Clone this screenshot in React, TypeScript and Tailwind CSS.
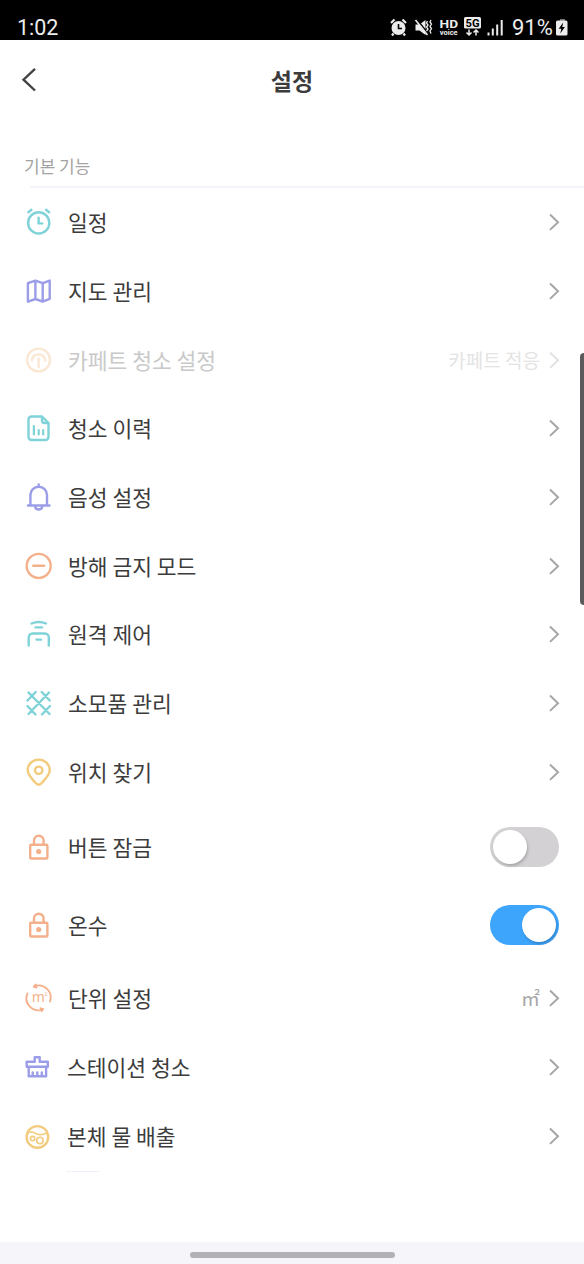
import type { ReactNode } from "react";

const TEAL = "#7fd3d8";
const VIOLET = "#9b9de8";
const ORANGE = "#f3b08a";
const YELLOW = "#f3cb7d";

const Icon = ({ color, children }: { color: string; children: ReactNode }) => (
  <svg
    viewBox="0 0 28 28"
    className="h-7 w-7 shrink-0 overflow-visible"
    fill="none"
    stroke={color}
    strokeWidth={2.4}
    strokeLinecap="round"
    strokeLinejoin="round"
  >
    {children}
  </svg>
);

const ClockIcon = () => (
  <Icon color={TEAL}>
    <circle cx="14.7" cy="14.9" r="10.6" />
    <path d="M14.6 9.8v5.6h3.6M4.4 4.200l3-2.400M22.100 1.800l3 2.400" />
  </Icon>
);

const MapIcon = () => (
  <Icon color={VIOLET}>
    <path d="M3.9 6.2l7.5-2.6 7.3 2.6 7-2.6v18.2l-7 2.8-7.3-2.6-7.5 2.6zM11.4 3.6V22M18.7 6.2v18.4" />
  </Icon>
);

const CarpetIcon = () => (
  <Icon color="#fbe8d4">
    <circle cx="14.6" cy="14" r="11.4" />
    <path d="M7.800 14.500c.4-3.800 3.200-6 6.800-6s6.400 2.200 6.800 6M14.600 12.500v8.500" />
  </Icon>
);

const HistoryIcon = () => (
  <Icon color={TEAL}>
    <path d="M18 2.5H7.5a3 3 0 0 0-3 3V23a3 3 0 0 0 3 3h14a3 3 0 0 0 3-3V9zM18 2.5V6.500a2.500 2.500 0 0 0 2.500 2.500h4" />
    <path d="M9.900 12v8.500M14.700 16v4.500M19.200 16v4.500" strokeWidth="2.200" />
  </Icon>
);

const BellIcon = () => (
  <Icon color={VIOLET}>
    <path d="M14.700 1.500v2M6.400 22.300V12a8.300 8.300 0 0 1 16.600 0v10.300M4 22.500h21.500M11 23.500c.4 2 1.800 3 3.700 3s3.300-1 3.700-3" />
  </Icon>
);

const MinusIcon = () => (
  <Icon color={ORANGE}>
    <circle cx="14.7" cy="13.9" r="12" />
    <path d="M9.200 13.700h11" />
  </Icon>
);

const RemoteIcon = () => (
  <Icon color={TEAL}>
    <path d="M7.500 3.500c4.500-1.900 10-1.900 14.500 0M11.600 7.400h6.300M4.700 25.500V17.500a4 4 0 0 1 4-4h12.100a4 4 0 0 1 4 4v8M12.500 19.600h4.500" />
  </Icon>
);

const PartsIcon = () => (
  <Icon color={TEAL}>
    <path d="M4.500 3.500l21 21.500M25 3.500L4.500 25M11.700 3L3.500 11.500M17.700 3l8 8.500M3.500 17l8 8.500M26 17l-8 8.500" />
  </Icon>
);

const PinIcon = () => (
  <Icon color={YELLOW}>
    <path d="M14.700 26.700c-1.500 0-2.400-.9-3.500-2.200C7.500 20.300 3.700 16.800 3.700 12.300a11 10.700 0 0 1 22 0c0 4.500-3.800 8-7.500 12.200-1.100 1.300-2 2.200-3.500 2.200z" />
    <circle cx="14.700" cy="12.300" r="3.700" />
  </Icon>
);

const LockIcon = () => (
  <Icon color={ORANGE}>
    <rect x="6.200" y="11.700" width="17.200" height="13.800" rx="1" />
    <path d="M10 11.500V7.500a4.800 4.800 0 0 1 9.600 0v4" />
    <circle cx="14.700" cy="18.500" r="1.400" fill={ORANGE} />
  </Icon>
);

const UnitIcon = () => (
  <Icon color={ORANGE}>
    <path
      d="M3.400 9.500A12 12 0 0 0 19 25.300M17.700 27l1.500-1.800-2.700-.9M26 17.500A12 12 0 0 0 9.700 2.600M11.800 .6l-2 1.900 2.700 1"
      strokeWidth="1.900"
    />
    <text
      x="7.800"
      y="17.800"
      fontSize="14"
      fill={ORANGE}
      stroke="none"
      className="font-['Noto_Sans',sans-serif]"
    >
      m
    </text>
    <text
      x="20.500"
      y="11.500"
      fontSize="5"
      fill={ORANGE}
      stroke="none"
      className="font-['Noto_Sans',sans-serif]"
    >
      2
    </text>
  </Icon>
);

const BrushIcon = () => (
  <Icon color={VIOLET}>
    <path d="M3.700 8.700h8V4.300h5v4.400h8.100v5H3.700zM5.700 13.700v9.600h17.400v-9.600M9.700 19.500v3.500M14.300 19.500v3.500M18.800 19.500v3.500" />
  </Icon>
);

const DrainIcon = () => (
  <Icon color={YELLOW}>
    <circle cx="14.400" cy="14.900" r="10.800" />
    <path
      d="M4.500 11.500c2.500-2 5-2 7.500-.3s6.500 2.300 12-.2"
      strokeWidth="1.600"
    />
    <circle cx="9.600" cy="16.600" r="2.200" strokeWidth="1.600" />
    <circle cx="16.900" cy="18.500" r="3.200" strokeWidth="1.600" />
  </Icon>
);

const Chevron = ({ faded }: { faded?: boolean }) => (
  <svg viewBox="0 0 12 20" className="h-5 w-3 shrink-0" fill="none">
    <path
      d="M2 2.500l8 7.700-8 7.700"
      stroke={faded ? "#e2e2e2" : "#a6a6a6"}
      strokeWidth="2"
    />
  </svg>
);

const Toggle = ({ on }: { on?: boolean }) => (
  <div
    className={`mr-px flex h-10 w-[69px] items-center rounded-full px-[3px] ${
      on ? "justify-end bg-[#3da5fc]" : "justify-start bg-[#d4d1d5]"
    }`}
  >
    <div className="h-[34px] w-[34px] rounded-full bg-white shadow-[1px_2px_3px_rgba(0,0,0,0.2)]"></div>
  </div>
);

type Item = {
  label: string;
  icon: ReactNode;
  value?: string;
  disabled?: boolean;
  toggle?: "on" | "off";
  shifted?: boolean;
};

const items: Item[] = [
  { label: "일정", icon: <ClockIcon /> },
  { label: "지도 관리", icon: <MapIcon /> },
  {
    label: "카페트 청소 설정",
    icon: <CarpetIcon />,
    value: "카페트 적응",
    disabled: true,
  },
  { label: "청소 이력", icon: <HistoryIcon /> },
  { label: "음성 설정", icon: <BellIcon /> },
  { label: "방해 금지 모드", icon: <MinusIcon /> },
  { label: "원격 제어", icon: <RemoteIcon /> },
  { label: "소모품 관리", icon: <PartsIcon /> },
  { label: "위치 찾기", icon: <PinIcon /> },
  { label: "버튼 잠금", icon: <LockIcon />, toggle: "off" },
  { label: "온수", icon: <LockIcon />, toggle: "on" },
  { label: "단위 설정", icon: <UnitIcon />, value: "㎡" },
  { label: "스테이션 청소", icon: <BrushIcon />, shifted: true },
  { label: "본체 물 배출", icon: <DrainIcon />, shifted: true },
];

const Row = ({ label, icon, value, disabled, toggle, shifted }: Item) => (
  <div
    className={`flex shrink-0 items-center pr-6 ${
      toggle ? "h-[78.8px] pt-[2px]" : "h-[68.7px]"
    } ${shifted ? "pl-[23px]" : "pl-6"}`}
  >
    {icon}
    <span
      className={`ml-4 grow text-[21.5px] leading-7 ${
        disabled ? "text-[#c9c9c9]" : "text-[#3c3c3c]"
      }`}
    >
      {label}
    </span>
    {value && (
      <span
        className={`mr-2 text-[19px] leading-7 ${
          disabled ? "text-[#e4e4e4]" : "text-[#a6a6a6]"
        }`}
      >
        {value}
      </span>
    )}
    {toggle ? <Toggle on={toggle === "on"} /> : <Chevron faded={disabled} />}
  </div>
);

const StatusBar = () => (
  <div className="flex h-10 shrink-0 items-center bg-black pt-[15px] pl-[17px] font-[Roboto,sans-serif] text-[#ececec]">
    <span className="grow text-[21.5px] leading-6">1:02</span>
    <svg viewBox="0 0 122 24" className="h-6 w-[122px]" fill="none">
      {/* alarm */}
      <circle cx="8.500" cy="12" r="7" fill="#ececec" />
      <path
        d="M1 7l3.500-3.500M16 7l-3.500-3.500M3.500 17.500L2 19.500M13.500 17.500l1.500 2"
        stroke="#ececec"
        strokeWidth="2.200"
      />
      <path d="M8.500 8v4.500h3.500" stroke="#000" strokeWidth="1.600" />
      {/* muted with vibration */}
      <path d="M25.500 8.500h4l6-4.500v15l-6-4.500h-4z" fill="#ececec" />
      <path d="M26.500 3l12 15" stroke="#000" strokeWidth="1.500" />
      <path d="M25.500 4l12 15" stroke="#ececec" strokeWidth="1.600" />
      <path
        d="M37.500 5l-1 2 1.500 2-1.500 2 1.500 2-1.500 2M41 4l-1 2 1.500 2-1.500 2.500 1.500 2-1.500 2.500 1 2.500"
        stroke="#ececec"
        strokeWidth="1.300"
      />
      {/* HD voice */}
      <text
        x="49.500"
        y="11.800"
        fontSize="11"
        fontWeight="700"
        textLength="18.500"
        lengthAdjust="spacingAndGlyphs"
        fill="#ececec"
      >
        HD
      </text>
      <text
        x="49.700"
        y="18.500"
        fontSize="7"
        fontWeight="700"
        textLength="18"
        lengthAdjust="spacingAndGlyphs"
        fill="#ececec"
      >
        voice
      </text>
      {/* 5G */}
      <rect x="74" y="1" width="17" height="11.500" rx="1.500" fill="#ececec" />
      <text
        x="75.500"
        y="10.700"
        fontSize="11"
        fontWeight="700"
        textLength="14"
        lengthAdjust="spacingAndGlyphs"
        fill="#000"
      >
        5G
      </text>
      <path
        d="M79 13.500v5.500M76.500 16.500l2.500 2.500 2.500-2.500M86 19.500v-5.500M83.500 16.500l2.500-2.500 2.500 2.500"
        stroke="#ececec"
        strokeWidth="1.500"
      />
      {/* signal */}
      <path
        d="M98.500 19.500v-3M102.800 19.500v-7M107.200 19.500v-11M111.700 19.500V4"
        stroke="#ececec"
        strokeWidth="2"
      />
    </svg>
    <span className="w-[44px] text-[22px] leading-6">91%</span>
    <svg viewBox="0 0 12 18" className="mr-4 h-[18px] w-3">
      <path d="M4 0h5v2H4z" fill="#777" />
      <rect x="0" y="1.500" width="11.500" height="15" rx="1.500" fill="#ececec" />
      <path d="M7.200 3.500L2.700 9.800h2.600L4.300 14.500 8.900 8H6.300z" fill="#000" />
    </svg>
  </div>
);

const App = () => {
  return (
    <div className="relative flex h-[1264px] w-[584px] flex-col overflow-hidden bg-white font-['Noto_Sans_CJK_KR',sans-serif]">
      <StatusBar />
      <div className="grid h-20 shrink-0 grid-cols-[1fr_auto_1fr] items-center px-5">
        <svg viewBox="0 0 18 26" className="h-[26px] w-[18px]" fill="none">
          <path
            d="M15 1.800L3.500 12.700 15 23.500"
            stroke="#444"
            strokeWidth="2.400"
          />
        </svg>
        <h1 className="text-[23px] leading-8 font-bold text-[#3c3c3c]">설정</h1>
      </div>
      <h2 className="mt-8 h-[34px] shrink-0 pl-6 text-[17px] leading-7 text-[#a3a3a3]">
        기본 기능
      </h2>
      <div className="ml-[30px] h-[2px] shrink-0 bg-[#f5f4fa]"></div>
      {items.map((item) => (
        <Row key={item.label} {...item} />
      ))}
      <div className="mt-[1.500px] ml-[66px] h-px w-[33px] shrink-0 bg-[#f1f0fa]"></div>
      <div className="mt-auto flex h-[22px] shrink-0 items-center justify-center bg-[#f6f5fa] pt-[3px]">
        <div className="h-[6px] w-[205px] rounded-full bg-[#b2b2b4]"></div>
      </div>
      {/* edge panel handle */}
      <div className="absolute top-[353px] -right-1 h-[252px] w-2 rounded-[4px] bg-[#5b5a5c]"></div>
    </div>
  );
};

export default App;
